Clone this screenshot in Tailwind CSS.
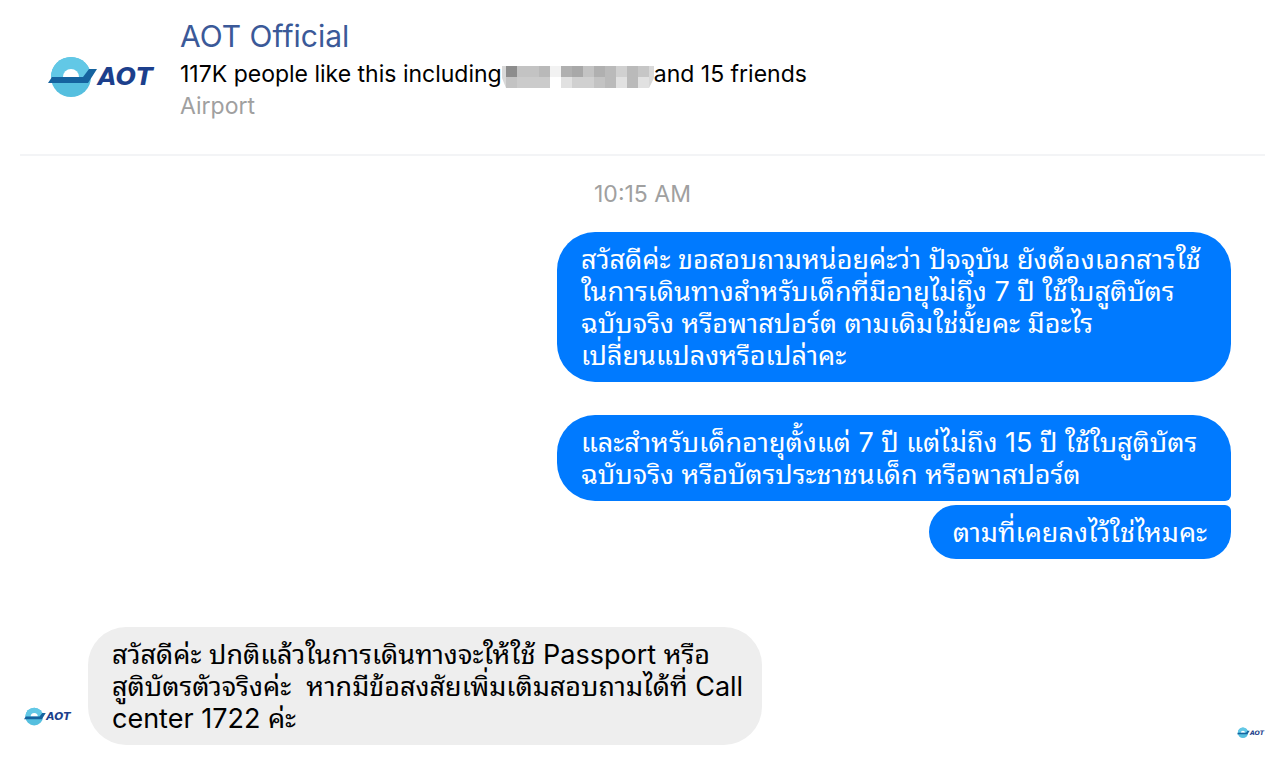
<!DOCTYPE html>
<html lang="th">
<head>
    <meta charset="UTF-8">
    <meta name="viewport" content="width=device-width, initial-scale=1.0">
    <title>AOT Official</title>
    <script src="https://cdn.jsdelivr.net/npm/@tailwindcss/browser@4"></script>
</head>
<body class="bg-white font-['Inter','Noto_Sans_Thai_Looped','Loma','Noto_Sans_Thai','Noto_Sans',sans-serif] text-black">
    <!-- Logo -->
    <svg class="hidden">
        <symbol id="logo" viewBox="0 0 108 44">
            <circle cx="23" cy="21" r="20" fill="#55bfdf"/>
            <path d="M3 21a20 20 0 0 1 40 0z" fill="#62c8e6"/>
            <path d="M15 21a8 8 0 0 1 16 0z" fill="#fff"/>
            <path d="M4 21h31l6-8h8l-9 14H0z" fill="#15639f"/>
            <text x="50" y="29" font-family="DejaVu Sans" font-size="24" font-weight="bold" font-style="italic" fill="#1c3f8c">AOT</text>
        </symbol>
    </svg>

    <header class="mr-[15px] ml-5 flex items-start border-b-2 border-gray-100 pt-4 pb-[34px]">
        <svg class="mt-10 ml-7 h-11 w-27 shrink-0" role="img" aria-label="AOT"><use href="#logo"/></svg>
        <div class="ml-6">
            <h1 class="text-[30px] leading-10"><a href="#" class="text-[#3b5998]">AOT Official</a></h1>
            <div class="flex items-center text-[23px] leading-9">
                <span>117K people like this including</span>
                <!-- Nombre oculto -->
                <svg class="mb-1 h-[22px] w-[152px] shrink-0 self-end" viewBox="2 0 152 22" aria-hidden="true">
                    <path d="M6 0H2v12l4 10zM149 0h5v12l-5 10z" fill="#d8d8d8"/>
                    <g shape-rendering="crispEdges">
                        <path d="M6 0h11v11H6z" fill="#8d8d8d"/>
                        <path d="M17 0h22v11H17zM6 11h11v11H6z" fill="#c3c3c3"/>
                        <path d="M39 0h11v11H39z" fill="#b9b9b9"/>
                        <path d="M17 11h33v11H17z" fill="#cbcbcb"/>
                        <path d="M50 0h11v11H50z" fill="#f2f2f2"/>
                        <path d="M61 0h11v11H61zM94 0h11v11H94z" fill="#b0b0b0"/>
                        <path d="M72 0h11v11H72z" fill="#a8a8a8"/>
                        <path d="M83 0h11v11H83zM94 11h11v11H94z" fill="#c3c3c3"/>
                        <path d="M105 0h11v11h-11zM127 0h11v22h-11zM105 11h11v11h-11z" fill="#bababa"/>
                        <path d="M116 0h11v11h-11zM72 11h22v11H72z" fill="#d0d0d0"/>
                        <path d="M138 0h11v11h-11z" fill="#c6c6c6"/>
                        <path d="M61 11h11v11H61zM116 11h11v11h-11zM138 11h11v11h-11z" fill="#e1e1e1"/>
                    </g>
                </svg>
                <span>and 15 friends</span>
            </div>
            <p class="text-[23px] leading-7 text-[#a0a0a0]">Airport</p>
        </div>
    </header>

    <main class="pr-[15px] pl-5">
        <p class="pt-6 text-center text-[23px] leading-7 text-[#a0a0a0]">10:15 AM</p>

        <section class="mt-6 mr-[34px] flex flex-col items-end text-[27px] leading-8 text-white">
            <p class="w-[674px] rounded-[38px] bg-[#007aff] pt-3 pr-4 pb-[10px] pl-6">สวัสดีค่ะ ขอสอบถามหน่อยค่ะว่า ปัจจุบัน ยังต้องเอกสารใช้<br>ในการเดินทางสำหรับเด็กที่มีอายุไม่ถึง 7 ปี ใช้ใบสูติบัตร<br>ฉบับจริง หรือพาสปอร์ต ตามเดิมใช่มั้ยคะ มีอะไร<br>เปลี่ยนแปลงหรือเปล่าคะ</p>
            <p class="mt-[33px] w-[674px] rounded-[38px] rounded-br-md bg-[#007aff] pt-3 pr-4 pb-[10px] pl-6">และสำหรับเด็กอายุตั้งแต่ 7 ปี แต่ไม่ถึง 15 ปี ใช้ใบสูติบัตร<br>ฉบับจริง หรือบัตรประชาชนเด็ก หรือพาสปอร์ต</p>
            <p class="mt-1 rounded-[27px] rounded-tr-md bg-[#007aff] px-6 pt-3 pb-[10px]">ตามที่เคยลงไว้ใช่ไหมคะ</p>
        </section>

        <section class="mt-17 flex items-end text-[27px] leading-8">
            <svg class="mb-[18px] ml-1 h-5 w-12 shrink-0" role="img" aria-label="AOT"><use href="#logo"/></svg>
            <p class="ml-4 w-[674px] rounded-[38px] bg-[#eee] pt-3 pr-4 pb-[10px] pl-6">สวัสดีค่ะ ปกติแล้วในการเดินทางจะให้ใช้ Passport หรือ<br>สูติบัตรตัวจริงค่ะ&nbsp; หากมีข้อสงสัยเพิ่มเติมสอบถามได้ที่ Call<br>center 1722 ค่ะ</p>
            <svg class="mb-[6px] ml-auto h-3 w-7 shrink-0" role="img" aria-label="AOT"><use href="#logo"/></svg>
        </section>
    </main>
</body>
</html>
